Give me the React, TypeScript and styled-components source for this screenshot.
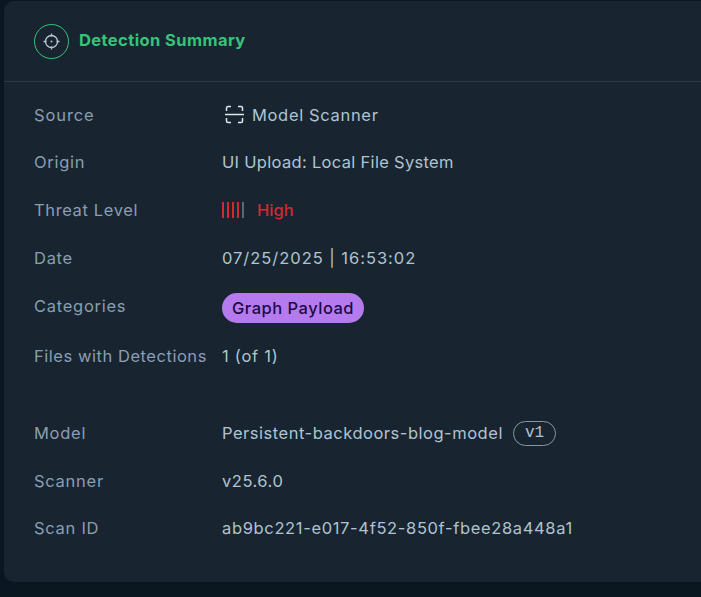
import React from 'react';
import styled, { createGlobalStyle } from 'styled-components';

const GlobalStyle = createGlobalStyle`
  html, body {
    margin: 0;
    height: 597px;
    overflow: hidden;
    background: #0b1720;
    font-family: "Inter", "Liberation Sans", sans-serif;
  }
`;

const Page = styled.div`
  width: 701px;
  height: 597px;
  box-sizing: border-box;
  padding: 1px 0 15px 4px;
`;

const Card = styled.section`
  height: 581px;
  box-sizing: border-box;
  background: #182530;
  border-radius: 10px 0 0 10px;
`;

const Header = styled.header`
  height: 81px;
  box-sizing: border-box;
  padding: 0 30px;
  display: flex;
  align-items: center;
  gap: 10px;
  border-bottom: 1px solid #2c3b47;
`;

const IconRing = styled.div`
  width: 35px;
  height: 35px;
  box-sizing: border-box;
  border: 1px solid #38c27a;
  border-radius: 50%;
  display: flex;
  align-items: center;
  justify-content: center;
`;

const Title = styled.h2`
  margin: 0 0 2px;
  font-size: 16.5px;
  font-weight: 700;
  color: #38c27a;
  letter-spacing: 0.41px;
`;

const Details = styled.div`
  padding: 9px 30px 0;
`;

const Row = styled.div<{ $height?: number; $gapAfter?: number }>`
  display: grid;
  grid-template-columns: 188px 1fr;
  align-items: center;
  height: ${(p) => p.$height ?? 48}px;
  margin-bottom: ${(p) => p.$gapAfter ?? 0}px;
`;

const Label = styled.div<{ $tracking?: number }>`
  font-size: 16.5px;
  color: #8a9db3;
  letter-spacing: ${(p) => p.$tracking ?? 0.72}px;
  white-space: nowrap;
`;

const Value = styled.div<{ $tracking?: number }>`
  display: flex;
  align-items: center;
  font-size: 16.5px;
  font-weight: 400;
  color: #b0c3d2;
  letter-spacing: ${(p) => p.$tracking ?? 0.52}px;
  white-space: nowrap;
`;

const ScannerIcon = styled.svg`
  margin: 0 8px 0 3px;
`;

const ThreatBars = styled.div`
  display: flex;
  gap: 3px;
  margin-right: 13px;
`;

const ThreatBar = styled.span<{ $active: boolean }>`
  width: 2px;
  height: 16px;
  background: ${(p) => (p.$active ? '#d5282f' : '#5a6874')};
`;

const High = styled.span`
  color: #d5282f;
  font-weight: 500;
  letter-spacing: 0;
`;

const Pill = styled.span`
  display: inline-flex;
  align-items: center;
  height: 30px;
  margin-top: 4px;
  padding: 0 10px;
  border-radius: 15px;
  background: #b57bee;
  color: #1c0a46;
  font-size: 16.5px;
  font-weight: 500;
  letter-spacing: 0.5px;
`;

const VersionTag = styled.span`
  display: inline-flex;
  align-items: center;
  height: 25px;
  box-sizing: border-box;
  margin-left: 10px;
  padding: 0 11px;
  border: 1px solid #8397a6;
  border-radius: 13px;
  font-family: "Liberation Mono", monospace;
  font-size: 16px;
  letter-spacing: 0;
`;

const TargetIcon = () => (
  <svg width="17" height="17" viewBox="0 0 17 17" fill="none" stroke="#b8c6d2" strokeWidth="1.3">
    <circle cx="8.5" cy="8.5" r="6" />
    <path d="M8.5 0.5V3.5M8.5 13.5V16.5M0.5 8.5H3.5M13.5 8.5H16.5" />
    <circle cx="8.5" cy="8.5" r="0.4" fill="#b8c6d2" />
  </svg>
);

const App: React.FC = () => (
  <>
    <GlobalStyle />
    <Page>
      <Card>
        <Header>
          <IconRing>
            <TargetIcon />
          </IconRing>
          <Title>Detection Summary</Title>
        </Header>
        <Details>
          <Row $height={47}>
            <Label $tracking={0.9}>Source</Label>
            <Value $tracking={0.66}>
              <ScannerIcon width="19" height="19" viewBox="0 0 19 19" fill="none" stroke="#dfe7ee" strokeWidth="1.5">
                <path d="M1.5 6V3a1.5 1.5 0 0 1 1.5-1.5H6M13 1.5h3A1.5 1.5 0 0 1 17.5 3V6M1.5 13v3A1.5 1.5 0 0 0 3 17.5H6M13 17.5h3a1.5 1.5 0 0 0 1.5-1.5V13" />
                <path d="M0 9.5H19" />
              </ScannerIcon>
              Model Scanner
            </Value>
          </Row>
          <Row>
            <Label>Origin</Label>
            <Value $tracking={0.31}>UI Upload: Local File System</Value>
          </Row>
          <Row>
            <Label $tracking={0.62}>Threat Level</Label>
            <Value>
              <ThreatBars>
                {[true, true, true, true, false].map((active, i) => (
                  <ThreatBar key={i} $active={active} />
                ))}
              </ThreatBars>
              <High>High</High>
            </Value>
          </Row>
          <Row>
            <Label>Date</Label>
            <Value $tracking={0.97}>07/25/2025 | 16:53:02</Value>
          </Row>
          <Row>
            <Label>Categories</Label>
            <Value>
              <Pill>Graph Payload</Pill>
            </Value>
          </Row>
          <Row $height={52} $gapAfter={27}>
            <Label $tracking={0.54}>Files with Detections</Label>
            <Value $tracking={0.75}>1 (of 1)</Value>
          </Row>
          <Row>
            <Label>Model</Label>
            <Value>
              Persistent-backdoors-blog-model
              <VersionTag>v1</VersionTag>
            </Value>
          </Row>
          <Row>
            <Label>Scanner</Label>
            <Value>v25.6.0</Value>
          </Row>
          <Row $height={46}>
            <Label>Scan ID</Label>
            <Value $tracking={0.65}>ab9bc221-e017-4f52-850f-fbee28a448a1</Value>
          </Row>
        </Details>
      </Card>
    </Page>
  </>
);

export default App;
